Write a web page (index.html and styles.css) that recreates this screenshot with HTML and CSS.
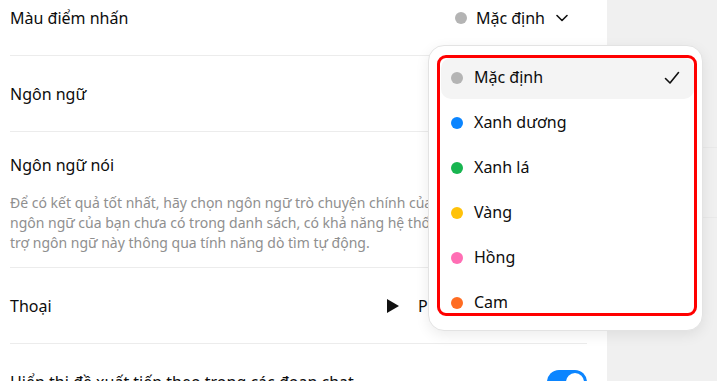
FILE: index.html
```html
<!DOCTYPE html>
<html lang="vi">
<head>
    <meta charset="UTF-8">
    <meta name="viewport" content="width=device-width, initial-scale=1.0">
    <title>Cài đặt</title>
    <link rel="stylesheet" href="styles.css">
</head>
<body>
    <div class="layout">
        <div class="panel">
            <div class="row">
                <span class="label">Màu điểm nhấn</span>
                <button class="select">
                    <span class="dot dot-default"></span>
                    <span>Mặc định</span>
                    <svg class="chevron" width="12" height="8" viewBox="0 0 12 8"><path d="M1 1.5l5 5 5-5" fill="none" stroke="#111" stroke-width="1.6" stroke-linecap="round" stroke-linejoin="round"/></svg>
                </button>
            </div>

            <div class="row">
                <span class="label">Ngôn ngữ</span>
            </div>

            <div class="row row-block">
                <span class="label">Ngôn ngữ nói</span>
                <p class="hint">Để có kết quả tốt nhất, hãy chọn ngôn ngữ trò chuyện chính của bạn. Nếu<br>ngôn ngữ của bạn chưa có trong danh sách, có khả năng hệ thống vẫn hỗ<br>trợ ngôn ngữ này thông qua tính năng dò tìm tự động.</p>
            </div>

            <div class="row">
                <span class="label">Thoại</span>
                <div class="voice">
                    <button class="play">
                        <svg width="14" height="16" viewBox="0 0 14 16"><path d="M1 1l12 7-12 7z" fill="#111"/></svg>
                        <span>Phát</span>
                    </button>
                </div>
            </div>

            <div class="row row-last">
                <span class="label">Hiển thị đề xuất tiếp theo trong các đoạn chat</span>
                <span class="toggle"><span class="knob"></span></span>
            </div>

            <div class="menu">
                <ul class="options">
                    <li class="option active"><span class="dot dot-default"></span>Mặc định
                        <svg class="check" width="16" height="14" viewBox="0 0 16 14"><path d="M1.5 7.5l4.5 4.5 8.5-10.5" fill="none" stroke="#111" stroke-width="1.6" stroke-linecap="round" stroke-linejoin="round"/></svg>
                    </li>
                    <li class="option"><span class="dot dot-blue"></span>Xanh dương</li>
                    <li class="option"><span class="dot dot-green"></span>Xanh lá</li>
                    <li class="option"><span class="dot dot-yellow"></span>Vàng</li>
                    <li class="option"><span class="dot dot-pink"></span>Hồng</li>
                    <li class="option"><span class="dot dot-orange"></span>Cam</li>
                </ul>
                <div class="highlight"></div>
            </div>
        </div>

        <div class="side">
            <div class="side-line line-one"></div>
            <div class="side-line line-two"></div>
        </div>
    </div>
</body>
</html>
```

FILE: styles.css
```css
body {
    margin: 0;
    font-family: "Noto Sans", "Open Sans", sans-serif;
    background-color: #f0f0f0;
    color: #0d0d0d;
    overflow: hidden;
}
.layout {
    display: flex;
    height: 381px;
    overflow: hidden;
}
.panel {
    position: relative;
    z-index: 1;
    width: 607px;
    flex-shrink: 0;
    background-color: #ffffff;
    padding: 0 20px 0 10px;
    box-sizing: border-box;
    margin-top: -20px;
}
.row {
    display: flex;
    align-items: center;
    justify-content: space-between;
    height: 75px;
    border-bottom: 1px solid #ececec;
}
.row-block {
    display: block;
    height: auto;
    padding: 21px 0 14px;
}
.row-last {
    border-bottom: none;
}
.label {
    font-size: 16px;
    line-height: 24px;
}
.select, .play {
    display: flex;
    align-items: center;
    border: none;
    background: none;
    padding: 0;
    font-family: inherit;
    font-size: 16px;
    color: #0d0d0d;
}
.select {
    gap: 9px;
    margin-right: 19px;
}
.chevron {
    margin-left: 2px;
}
.voice {
    width: 201px;
}
.play {
    gap: 18px;
}
.hint {
    margin: 16px 0 0;
    font-size: 14px;
    line-height: 20px;
    color: #8f8f8f;
}
.dot {
    width: 12px;
    height: 12px;
    border-radius: 50%;
    flex-shrink: 0;
}
.dot-default { background-color: #b4b4b4; }
.dot-blue { background-color: #0b85ff; }
.dot-green { background-color: #18b550; }
.dot-yellow { background-color: #ffc20a; }
.dot-pink { background-color: #ff6eb4; }
.dot-orange { background-color: #ff6c22; }
.toggle {
    position: relative;
    width: 40px;
    height: 24px;
    border-radius: 12px;
    background-color: #0b85ff;
}
.knob {
    position: absolute;
    top: 3px;
    right: 3px;
    width: 18px;
    height: 18px;
    border-radius: 50%;
    background-color: #ffffff;
}
.menu {
    position: absolute;
    z-index: 2;
    left: 428px;
    top: 65px;
    width: 275px;
    height: 286px;
    box-sizing: border-box;
    padding: 12px 8px 0 12px;
    background-color: #ffffff;
    border: 1px solid #e3e3e3;
    border-radius: 16px;
    box-shadow: 0 4px 14px rgba(0, 0, 0, 0.08);
}
.options {
    list-style: none;
    margin: 0;
    padding: 0;
    display: flex;
    flex-direction: column;
    gap: 4px;
}
.option {
    display: flex;
    align-items: center;
    gap: 11px;
    height: 41px;
    box-sizing: border-box;
    padding: 0 14px 4px 10px;
    border-radius: 10px;
    font-size: 16px;
}
.option .dot {
    margin-top: 2px;
}
.option.active {
    background-color: #f4f4f4;
}
.check {
    margin-left: auto;
    margin-top: 2px;
}
.highlight {
    position: absolute;
    left: 8px;
    top: 9px;
    width: 260px;
    height: 261px;
    box-sizing: border-box;
    border: 3px solid #ff0000;
    border-radius: 9px;
}
.side {
    position: relative;
    flex: 1;
}
.side-line {
    position: absolute;
    left: 0;
    right: 0;
    height: 1px;
    background-color: #e9e9e9;
}
.line-one { top: 147px; }
.line-two { top: 217px; }
```
